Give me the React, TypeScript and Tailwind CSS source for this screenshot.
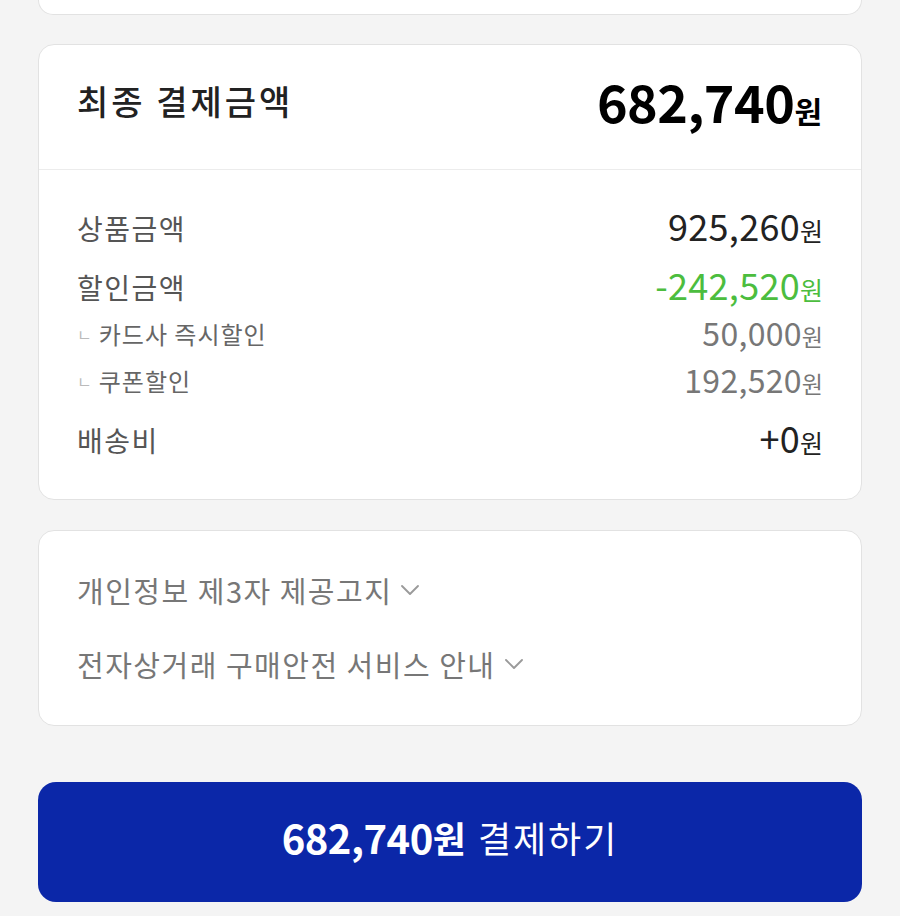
import { ChevronDown } from "lucide-react";

const font = { fontFamily: '"Noto Sans CJK KR", "Noto Sans", sans-serif' };

function Row({ label, value, tone = "text-[#222]" }: { label: string; value: string; tone?: string }) {
  return (
    <div className="flex h-[44px] items-center justify-between">
      <span className="text-[28px] tracking-[1.5px] text-[#555]">{label}</span>
      <span className={`flex items-baseline pb-[6px] ${tone}`}>
        <span className="text-[36px] tracking-[0.3px]">{value}</span>
        <span className="text-[25px]">원</span>
      </span>
    </div>
  );
}

function SubRow({ label, value }: { label: string; value: string }) {
  return (
    <div className="flex h-[40px] items-center justify-between">
      <span className="flex items-center text-[24px] tracking-[1px] text-[#666]">
        <span className="mr-[6px] text-[16px] text-[#bbb]">ㄴ</span>
        {label}
      </span>
      <span className="flex items-baseline pb-[4px] text-[#777]">
        <span className="text-[32px] tracking-[0.3px]">{value}</span>
        <span className="text-[23px]">원</span>
      </span>
    </div>
  );
}

function Notice({ label }: { label: string }) {
  return (
    <div className="flex h-[44px] items-center text-[29px] tracking-[1.5px] text-[#777]">
      {label}
      <ChevronDown className="ml-[2px] h-[32px] w-[32px] text-[#9a9a9a]" strokeWidth={1.4} />
    </div>
  );
}

export default function App() {
  return (
    <div style={font} className="h-[916px] overflow-hidden bg-[#f4f4f4] px-[38px] leading-none">
      {/* previous card, cut off at the top */}
      <div className="h-[15px] rounded-b-[16px] border-x border-b border-[#e2e2e2] bg-white" />

      {/* payment summary */}
      <div className="mt-[29px] rounded-[16px] border border-[#e2e2e2] bg-white">
        <div className="flex h-[125px] items-center justify-between border-b border-[#ececec] pb-[12px] pl-[38px] pr-[39px]">
          <span className="text-[34px] font-medium tracking-[3px] text-[#222]">최종 결제금액</span>
          <span className="flex items-baseline text-black">
            <span className="text-[52px] font-bold tracking-[-0.5px]">682,740</span>
            <span className="text-[30px] font-bold">원</span>
          </span>
        </div>
        <div className="px-[38px] pb-[37px] pt-[36px]">
          <Row label="상품금액" value="925,260" />
          <div className="mt-[15px]">
            <Row label="할인금액" value="-242,520" tone="text-[#4cbd3e]" />
          </div>
          <div className="mt-[5px]">
            <SubRow label="카드사 즉시할인" value="50,000" />
          </div>
          <div className="mt-[7px]">
            <SubRow label="쿠폰할인" value="192,520" />
          </div>
          <div className="mt-[17px]">
            <Row label="배송비" value="+0" />
          </div>
        </div>
      </div>

      {/* notices */}
      <div className="mt-[30px] rounded-[16px] border border-[#e2e2e2] bg-white px-[38px] pb-[39px] pt-[37px]">
        <Notice label="개인정보 제3자 제공고지" />
        <div className="mt-[30px]">
          <Notice label="전자상거래 구매안전 서비스 안내" />
        </div>
      </div>

      <button className="mt-[56px] flex h-[120px] w-full items-center justify-center rounded-[18px] bg-[#0b27a8] pb-[10px] text-white">
        <span className="text-[40px] font-bold tracking-[-0.5px]">682,740</span>
        <span className="text-[36px] font-bold">원</span>
        <span className="ml-[12px] text-[36px] tracking-[2px]">결제하기</span>
      </button>
    </div>
  );
}
